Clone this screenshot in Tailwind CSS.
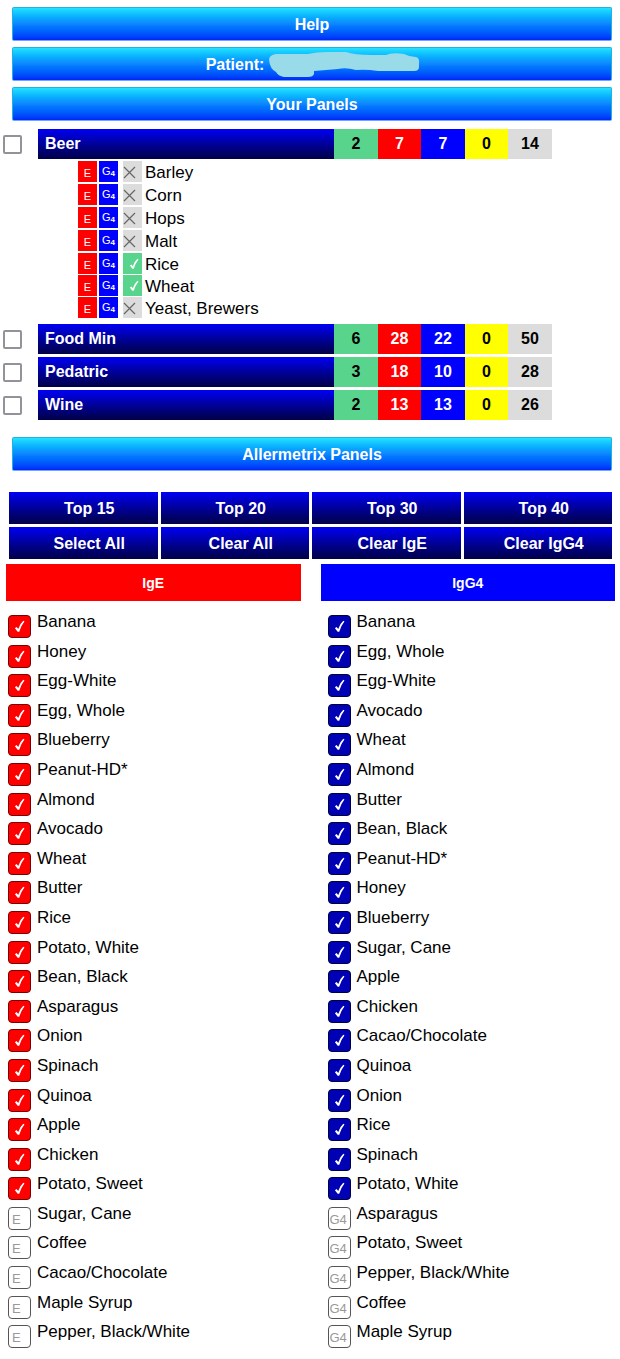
<!DOCTYPE html>
<html lang="en">
<head>
<meta charset="utf-8">
<meta name="viewport" content="width=device-width, initial-scale=1">
<title>Allermetrix Panels</title>
<script src="https://cdn.jsdelivr.net/npm/@tailwindcss/browser@4"></script>
</head>
<body class="bg-white text-black font-['Liberation_Sans',Arial,sans-serif] text-[17px]">
<main class="flex min-h-screen flex-col pt-[7px] pb-3">

  <div class="mx-2 ml-3 flex flex-col gap-1.5">
    <button type="button" class="h-[34px] rounded-xs border border-[#1fb4e0] border-b-[#6fa4ff] bg-linear-to-b from-[#25e2ff] via-[#1284ff] to-[#0026f8] pt-0.5 text-base leading-none font-bold text-white">Help</button>
    <button type="button" class="flex h-[34px] items-center justify-center gap-1 rounded-xs border border-[#1fb4e0] border-b-[#6fa4ff] bg-linear-to-b from-[#25e2ff] via-[#1284ff] to-[#0026f8] pt-0.5 pl-0.5 text-base leading-none font-bold text-white">
      <span>Patient:</span>
      <svg class="h-[26px] w-[152px]" viewBox="0 0 152 26" aria-hidden="true"><path fill="#9adbea" d="M1 8Q1 3 8 2L40 2Q48 0 60 0L78 0Q86 3 104 3L118 3Q124 0 136 2Q142 5 148 5Q152 6 151 12V15Q151 19 146 19H110Q98 17 88 18Q78 15 70 17L46 19V22Q45 25 40 25H16Q10 24 8 20Q2 17 1 8Z"/></svg>
    </button>
    <h1 class="flex h-[34px] items-center justify-center rounded-xs border border-[#1fb4e0] border-b-[#6fa4ff] bg-linear-to-b from-[#25e2ff] via-[#1284ff] to-[#0026f8] pt-0.5 text-base leading-none font-bold text-white">Your Panels</h1>
  </div>

  <table class="mt-2 mr-[68px] ml-[3px] block">
    <tbody id="panels" class="block"></tbody>
  </table>

  <h2 class="mt-3.5 mr-2 ml-3 flex h-[34px] shrink-0 items-center justify-center rounded-xs border border-[#1fb4e0] border-b-[#6fa4ff] bg-linear-to-b from-[#25e2ff] via-[#1284ff] to-[#0026f8] pt-0.5 text-base leading-none font-bold text-white">Allermetrix Panels</h2>

  <div id="actions" class="mt-[21px] mr-2 ml-[9px] grid grid-cols-4 gap-[3px]"></div>

  <div class="mt-[5px] mr-[5px] ml-1.5 grid flex-1 grid-cols-2 gap-5">
    <section class="flex flex-col">
      <h3 class="flex h-[37px] items-center justify-center bg-[#ff0000] text-sm font-bold text-white">IgE</h3>
      <ul id="ige" class="mt-1.5 flex flex-1 flex-col pl-0.5"></ul>
    </section>
    <section class="flex flex-col">
      <h3 class="flex h-[37px] items-center justify-center bg-[#0000ff] text-sm font-bold text-white">IgG4</h3>
      <ul id="igg4" class="mt-1.5 flex flex-1 flex-col pl-[7px]"></ul>
    </section>
  </div>
</main>

<script>
const tick = cls => `<svg class="${cls}" viewBox="0 0 12 14" aria-hidden="true"><path d="M1 8.8L2.800 7.600L4.600 9.600Q6.500 4 10.200 .8L11.400 1.600Q7.800 6 5.700 12.600L4 12.800Z" fill="#fff"/></svg>`;
const cross = `<svg class="size-[13px]" viewBox="0 0 13 13" aria-hidden="true"><path d="M1 1L12 12M12 1L1 12" stroke="#666" stroke-width="1.2" fill="none"/></svg>`;

const panels = [
  ["Beer", 2, 7, 7, 0, 14, [["Barley", 0], ["Corn", 0], ["Hops", 0], ["Malt", 0], ["Rice", 1], ["Wheat", 1], ["Yeast, Brewers", 0]]],
  ["Food Min", 6, 28, 22, 0, 50],
  ["Pedatric", 3, 18, 10, 0, 28],
  ["Wine", 2, 13, 13, 0, 26],
];
const cellColors = ["bg-[#59d48d] text-black", "bg-[#ff0000] text-white", "bg-[#0000ff] text-white", "bg-[#ffff00] text-black", "bg-[#dcdcdc] text-black"];

const item = ([name, on]) => `
  <li class="flex items-start ${on ? "h-[22px]" : "h-[23px]"}">
    <span class="flex h-[21px] w-[19px] items-center justify-center bg-[#ff0000] pt-1 text-[11px] leading-none text-white">E</span>
    <span class="ml-0.5 flex h-[21px] w-[19px] items-start justify-center bg-[#0000ff] pt-[5px] text-[11px] leading-none text-white">G<span class="pt-1 text-[8px] leading-none font-bold">4</span></span>
    <span class="ml-[5px] flex h-[21px] w-[19px] items-center ${on ? "justify-center bg-[#59d48d] pl-0.5" : "bg-[#dcdcdc] pt-0.5"}">${on ? tick("h-3 w-2.5") : cross}</span>
    <span class="ml-[3px] leading-[24px]">${name}</span>
  </li>`;

document.getElementById("panels").innerHTML = panels.map(([name, ...rest], i) => {
  const items = rest[5];
  return `<tr class="grid h-[30px] grid-cols-[35px_1fr_44px_43px_44px_43px_44px] text-base font-bold ${items ? "" : "mb-[3px]"}">
    <td class="pt-1.5"><input type="checkbox" id="panel${i}" aria-label="${name}" class="block size-[19px] appearance-none rounded-xs border-2 border-[#92929a] bg-white checked:bg-[#0000ff]"></td>
    <th class="bg-linear-to-b from-[#0000f5] to-[#000048]"><button type="button" class="flex size-full items-center pl-[7px] text-white">${name}</button></th>
    ${rest.slice(0, 5).map((n, k) => `<td class="flex items-center justify-center ${cellColors[k]}">${n}</td>`).join("")}
  </tr>` + (items ? `<tr class="block"><td class="block pt-0.5 pb-1 pl-[75px]"><ul>${items.map(item).join("")}</ul></td></tr>` : "");
}).join("");

document.getElementById("actions").innerHTML = ["Top 15", "Top 20", "Top 30", "Top 40", "Select All", "Clear All", "Clear IgE", "Clear IgG4"].map(t =>
  `<button type="button" class="h-8 bg-linear-to-b from-[#0000f5] to-[#000048] pt-0.5 pl-3 text-base leading-none font-bold text-white">${t}</button>`).join("");

const ige = ["Banana", "Honey", "Egg-White", "Egg, Whole", "Blueberry", "Peanut-HD*", "Almond", "Avocado", "Wheat", "Butter", "Rice", "Potato, White", "Bean, Black", "Asparagus", "Onion", "Spinach", "Quinoa", "Apple", "Chicken", "Potato, Sweet", "Sugar, Cane", "Coffee", "Cacao/Chocolate", "Maple Syrup", "Pepper, Black/White"];
const igg4 = ["Banana", "Egg, Whole", "Egg-White", "Avocado", "Wheat", "Almond", "Butter", "Bean, Black", "Peanut-HD*", "Honey", "Blueberry", "Sugar, Cane", "Apple", "Chicken", "Cacao/Chocolate", "Quinoa", "Onion", "Rice", "Spinach", "Potato, White", "Asparagus", "Potato, Sweet", "Pepper, Black/White", "Coffee", "Maple Syrup"];

const fill = (id, names, mark, checkedColors, markPad) => {
  document.getElementById(id).innerHTML = names.map((name, i) => `
    <li class="flex-1">
      <label for="${id}${i}" class="flex h-[29px] items-start gap-1.5">
        <span class="mt-2 grid size-[23px] shrink-0">
          <input type="checkbox" id="${id}${i}" ${i < 20 ? "checked" : ""} class="peer col-start-1 row-start-1 size-[23px] appearance-none rounded-sm border border-[#555] bg-white ${checkedColors}">
          <span class="pointer-events-none col-start-1 row-start-1 self-center pt-0.5 text-[13px] leading-none text-[#999] peer-checked:hidden ${markPad}" aria-hidden="true">${mark}</span>
          <span class="pointer-events-none col-start-1 row-start-1 hidden place-self-center peer-checked:block">${tick("h-[13px] w-[11px]")}</span>
        </span>
        <span class="leading-[30px]">${name}</span>
      </label>
    </li>`).join("");
};
fill("ige", ige, "E", "checked:border-[#7a0000] checked:bg-[#ff0000]", "pl-1");
fill("igg4", igg4, "G4", "checked:border-[#00003c] checked:bg-[#0000b4]", "pl-0.5");
</script>
</body>
</html>
